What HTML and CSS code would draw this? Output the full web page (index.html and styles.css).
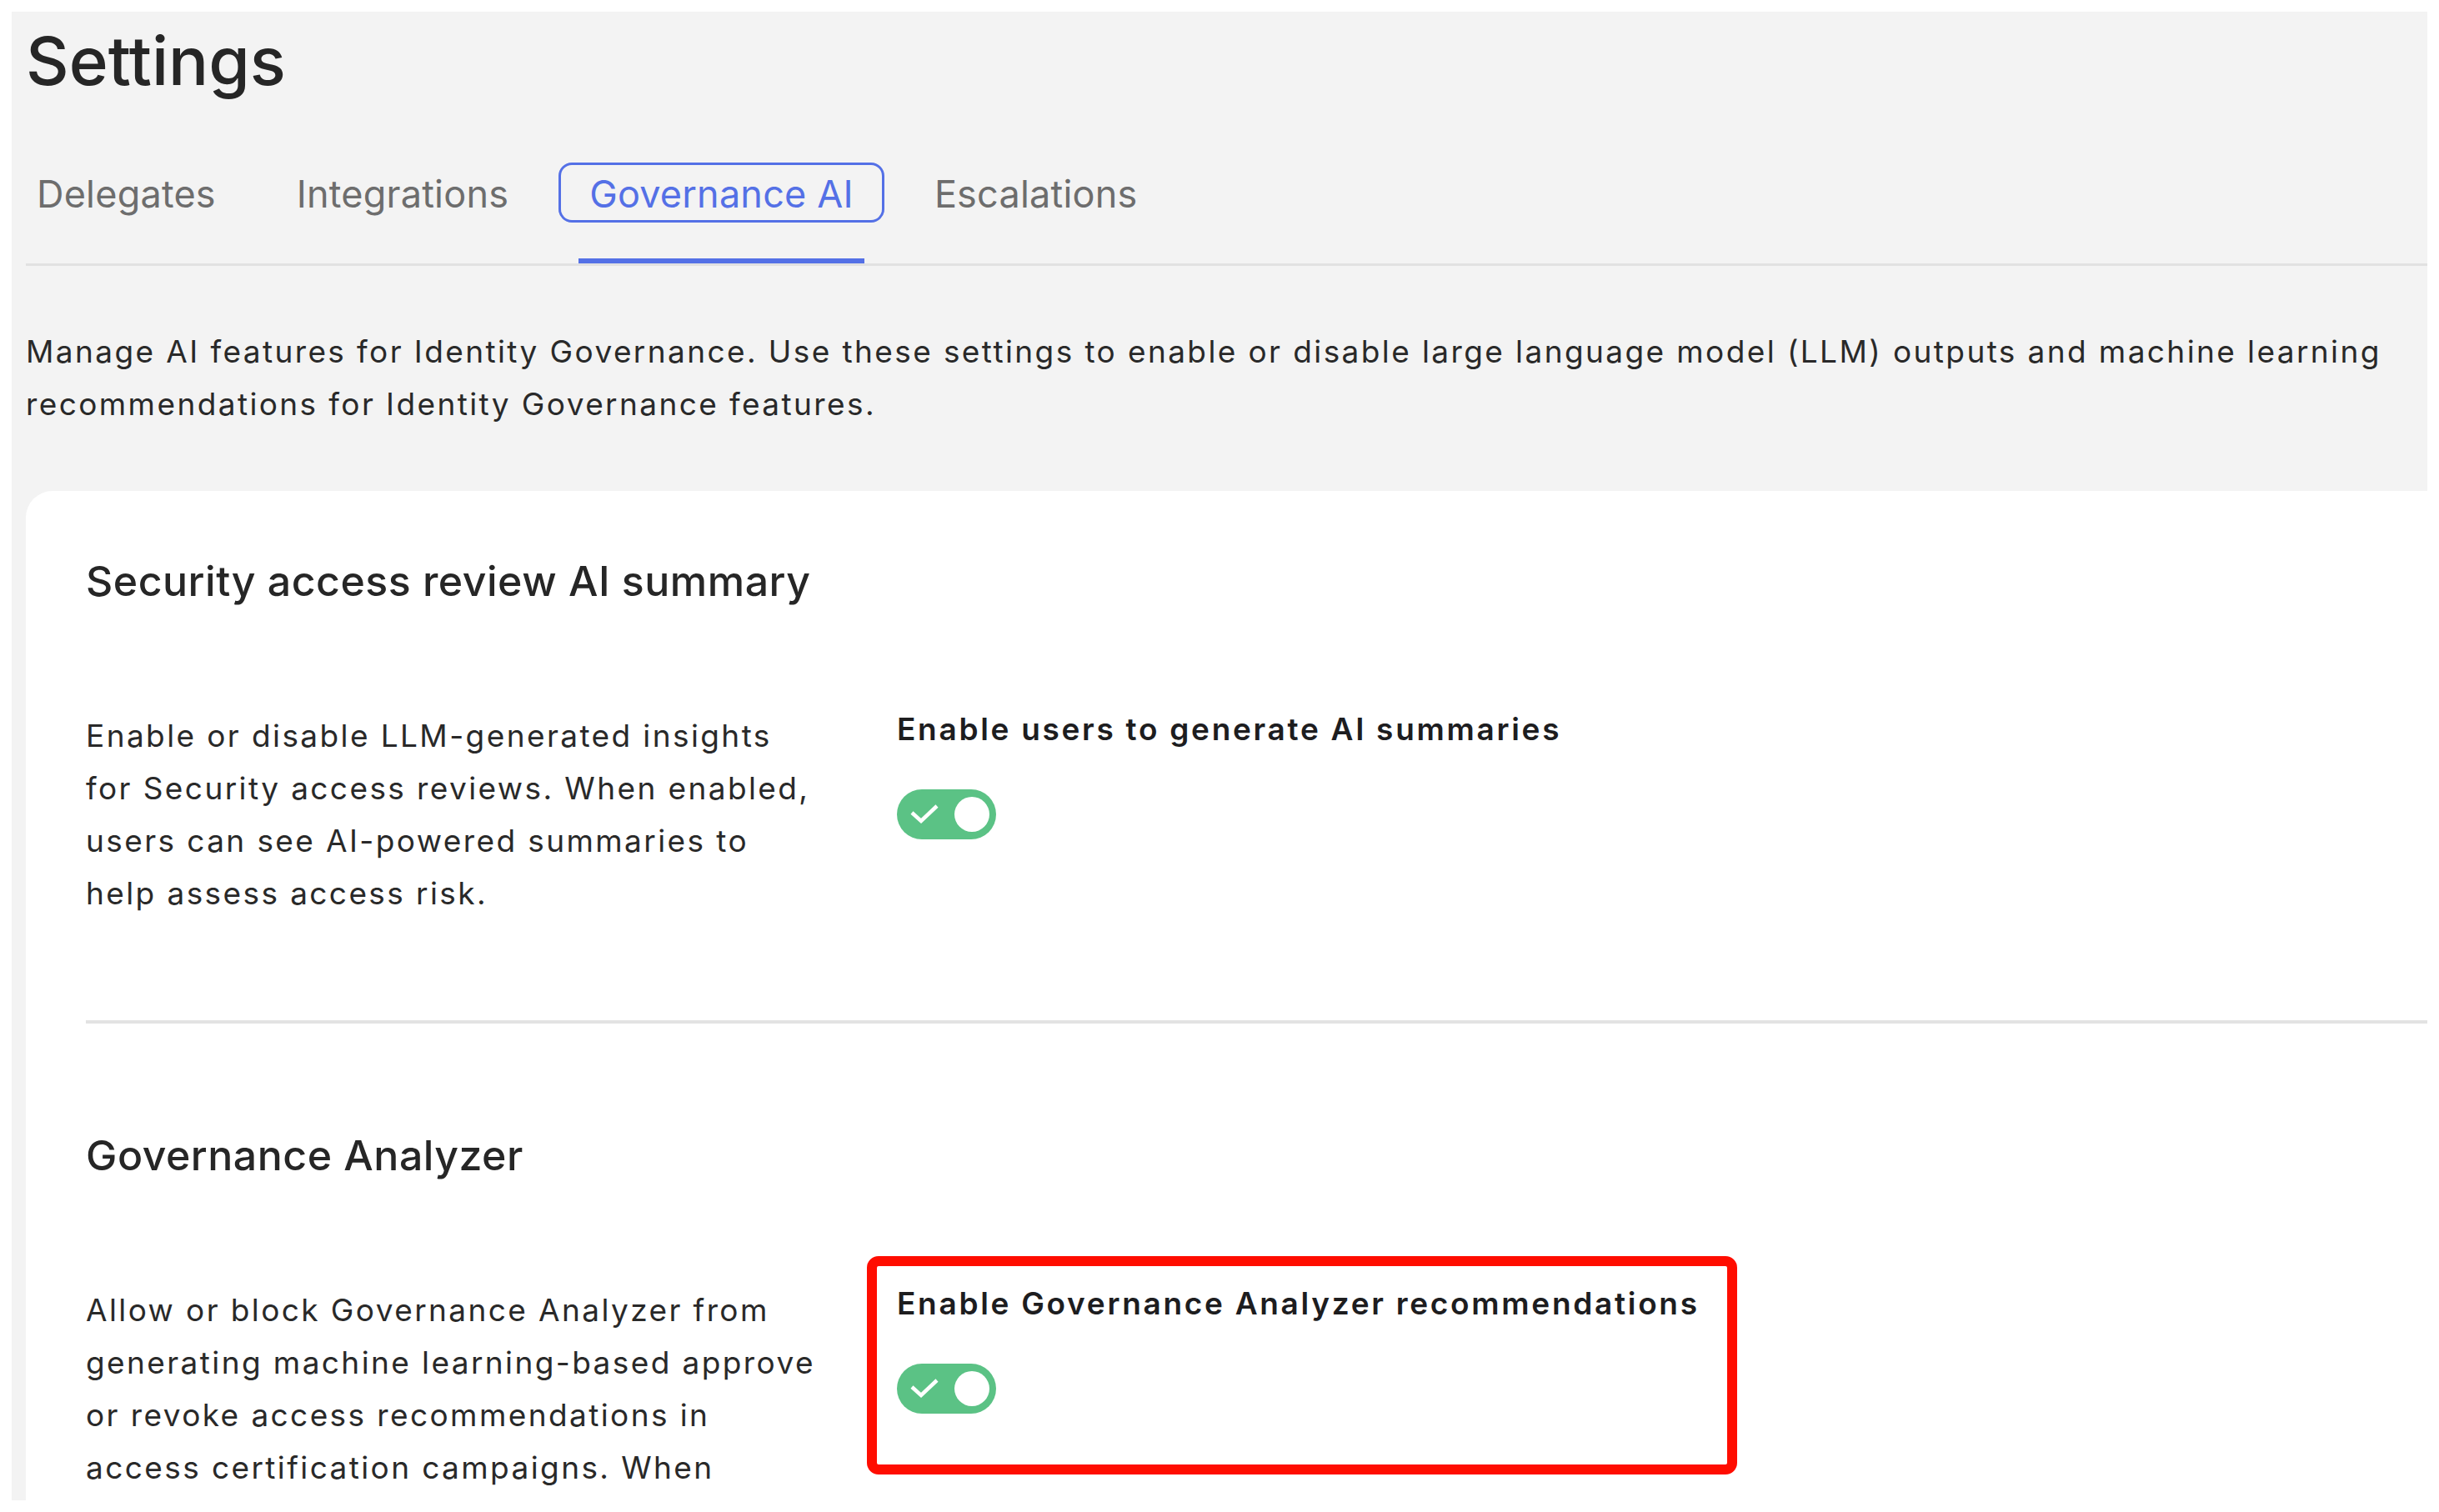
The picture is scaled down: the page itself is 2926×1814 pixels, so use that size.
FILE: index.html
```html
<!DOCTYPE html>
<html lang="en">
<head>
    <meta charset="UTF-8">
    <meta name="viewport" content="width=device-width, initial-scale=1.0">
    <title>Settings - Governance AI</title>
    <link rel="stylesheet" href="styles.css">
</head>
<body>
    <div class="window">
        <h1 class="page-title">Settings</h1>

        <nav class="tabs">
            <a class="tab" href="#">Delegates</a>
            <a class="tab" href="#">Integrations</a>
            <a class="tab tab-active" href="#"><span class="tab-label">Governance AI</span></a>
            <a class="tab" href="#">Escalations</a>
        </nav>

        <p class="intro">Manage AI features for Identity Governance. Use these settings to enable or disable large language model (LLM) outputs and machine learning recommendations for Identity Governance features.</p>

        <section class="card">
            <div class="setting">
                <h2 class="setting-title">Security access review AI summary</h2>
                <div class="setting-row">
                    <p class="setting-desc">Enable or disable LLM-generated insights for Security access reviews. When enabled, users can see AI-powered summaries to help assess access risk.</p>
                    <div class="setting-control">
                        <div class="control-label">Enable users to generate AI summaries</div>
                        <span class="switch" role="switch" aria-checked="true">
                            <svg class="switch-check" width="34" height="24" viewBox="0 0 34 24">
                                <path d="M2 10 L13 20 L32 2" fill="none" stroke="#fff" stroke-width="4.5"/>
                            </svg>
                            <span class="switch-knob"></span>
                        </span>
                    </div>
                </div>
            </div>

            <hr class="divider">

            <div class="setting">
                <h2 class="setting-title">Governance Analyzer</h2>
                <div class="setting-row">
                    <p class="setting-desc">Allow or block Governance Analyzer from generating machine learning-based approve or revoke access recommendations in access certification campaigns. When</p>
                    <div class="setting-control">
                        <div class="highlight"></div>
                        <div class="control-label">Enable Governance Analyzer recommendations</div>
                        <span class="switch" role="switch" aria-checked="true">
                            <svg class="switch-check" width="34" height="24" viewBox="0 0 34 24">
                                <path d="M2 10 L13 20 L32 2" fill="none" stroke="#fff" stroke-width="4.5"/>
                            </svg>
                            <span class="switch-knob"></span>
                        </span>
                    </div>
                </div>
            </div>
        </section>
    </div>
</body>
</html>
```

FILE: styles.css
```css
body {
    margin: 14px;
    padding: 0;
    background-color: #fff;
    font-family: Inter, "Noto Sans", sans-serif;
    color: #2b2b2b;
}

.window {
    height: 1786px;
    overflow: hidden;
    padding-left: 17px;
    background-color: #f3f3f3;
    box-shadow: 0 0 14px rgba(0, 0, 0, 0.22);
}

.page-title {
    margin: 0;
    padding-top: 11px;
    font-size: 80px;
    line-height: 96px;
    font-weight: 500;
    color: #262626;
}

/* tabs */
.tabs {
    display: flex;
    gap: 71px;
    margin-top: 44px;
    border-bottom: 3px solid #e1e1e1;
}

.tab {
    padding: 41px 13px 50px 13px;
    border-bottom: 6px solid transparent;
    font-size: 45px;
    line-height: 54px;
    letter-spacing: 0.2px;
    color: #6d6d6d;
    text-decoration: none;
}

.tab-active {
    color: #5470e6;
    border-bottom-color: #5470e6;
}

.tab-label {
    position: relative;
}

.tab-label::after {
    content: "";
    position: absolute;
    top: -10px;
    bottom: -7px;
    left: -37px;
    right: -37px;
    border: 3px solid #5470e6;
    border-radius: 16px;
}

.intro {
    margin: 71px 0 0 0;
    font-size: 37px;
    line-height: 63px;
    letter-spacing: 2.4px;
    color: #292929;
}

/* card */
.card {
    margin-top: 73px;
    padding-left: 72px;
    background-color: #fff;
    border-top-left-radius: 32px;
    min-height: 1400px;
}

.setting {
    padding-top: 78px;
}

.setting-title {
    margin: 0;
    font-size: 50px;
    line-height: 60px;
    font-weight: 500;
    letter-spacing: 0.5px;
    color: #262626;
}

.setting-row {
    display: grid;
    grid-template-columns: 888px 1fr;
    column-gap: 85px;
    margin-top: 124px;
    padding-bottom: 121px;
}

.setting-desc {
    margin: 0;
    font-size: 37px;
    line-height: 63px;
    letter-spacing: 2.4px;
    color: #292929;
}

.setting-control {
    position: relative;
}

.control-label {
    font-size: 37px;
    line-height: 48px;
    font-weight: 600;
    letter-spacing: 2.7px;
    color: #1d1d1f;
}

.switch {
    display: flex;
    align-items: center;
    justify-content: space-between;
    box-sizing: border-box;
    width: 119px;
    height: 60px;
    margin-top: 48px;
    padding: 0 8px 0 16px;
    border-radius: 30px;
    background-color: #5bc285;
}

.switch-knob {
    width: 42px;
    height: 42px;
    border-radius: 50%;
    background-color: #fff;
}

.divider {
    margin: 0 0 50px 0;
    border: none;
    height: 4px;
    background-color: #e3e3e3;
}

/* red annotation around the second control */
.highlight {
    position: absolute;
    top: -33px;
    left: -36px;
    width: 1044px;
    height: 262px;
    box-sizing: border-box;
    border: 12px solid #ff0d00;
    border-radius: 14px;
}
```
